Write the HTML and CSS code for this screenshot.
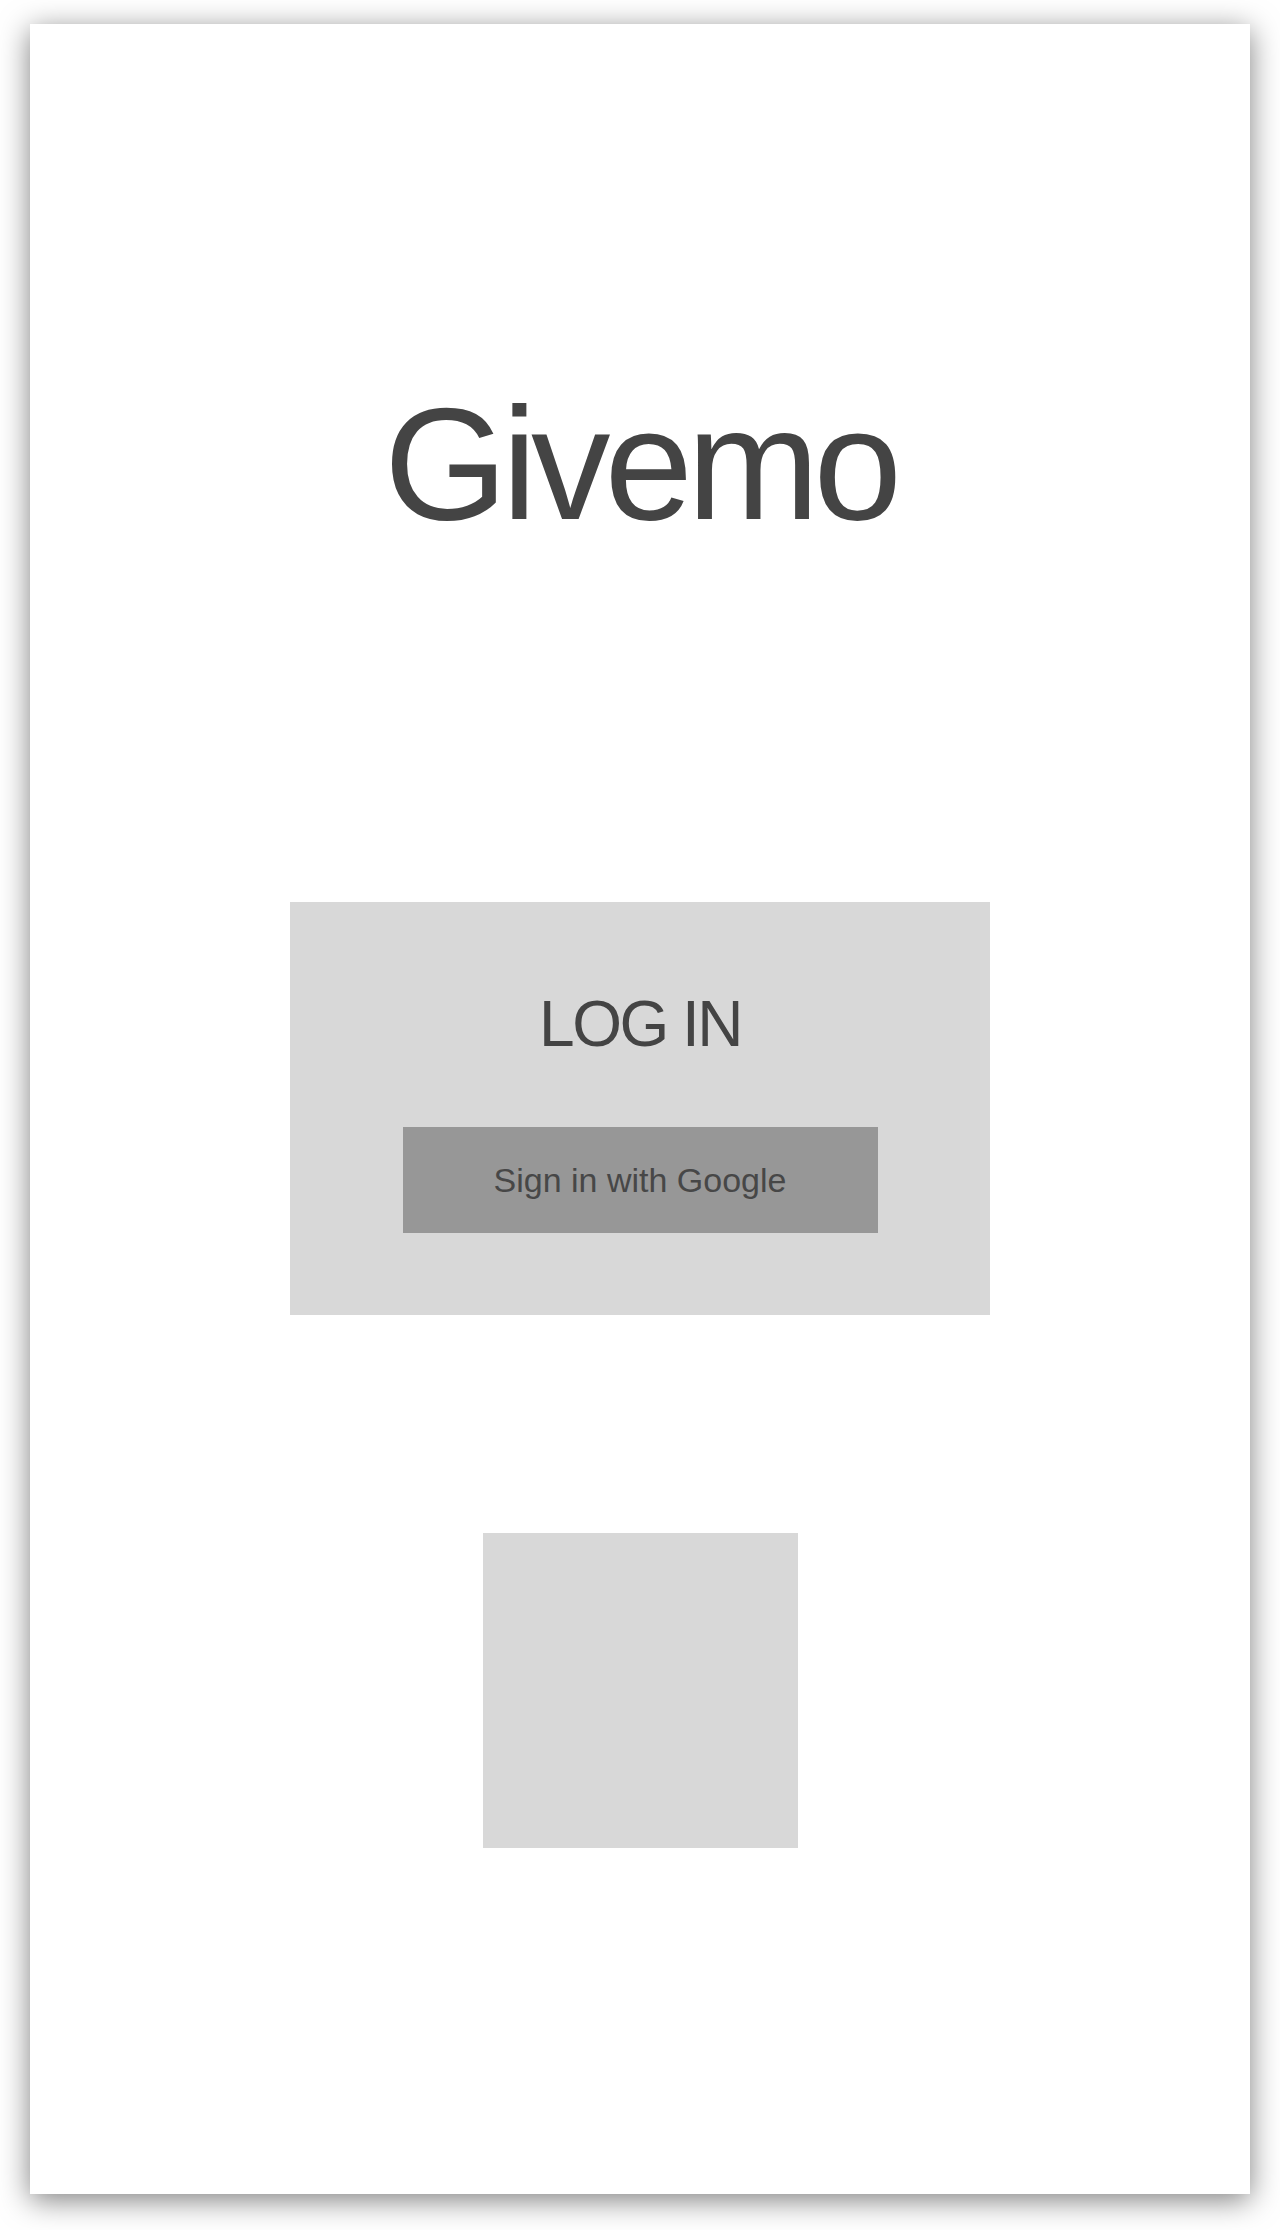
FILE: index.html
```html
<!DOCTYPE html>
<html lang="en">
<head>
<meta charset="utf-8">
<title>Givemo</title>
<link rel="stylesheet" href="styles.css">
</head>
<body>
  <main class="screen">
    <h1 class="brand">Givemo</h1>
    <section class="login">
      <h2 class="login-title">LOG IN</h2>
      <button class="google-btn" type="button">Sign in with Google</button>
    </section>
    <div class="placeholder"></div>
  </main>
</body>
</html>
```

FILE: styles.css
```css
html, body {
  margin: 0;
  padding: 0;
  background: #ffffff;
}

body {
  padding: 24px 30px 36px;
  font-family: "Liberation Sans", Arial, sans-serif;
}

.screen {
  width: 1220px;
  height: 2170px;
  box-sizing: border-box;
  background: #ffffff;
  box-shadow: 0 6px 28px rgba(0, 0, 0, 0.5);
  display: flex;
  flex-direction: column;
  align-items: center;
  padding-top: 361px;
}

.brand {
  margin: 0;
  font-size: 159px;
  line-height: 1;
  font-weight: 400;
  color: #444444;
  letter-spacing: -6px;
}

.login {
  margin-top: 358px;
  width: 700px;
  height: 413px;
  box-sizing: border-box;
  background: #d8d8d8;
  display: flex;
  flex-direction: column;
  align-items: center;
  padding-top: 90px;
}

.login-title {
  margin: 0;
  font-size: 64px;
  line-height: 1;
  font-weight: 400;
  color: #444444;
  letter-spacing: -2.5px;
}

.google-btn {
  margin-top: 71px;
  width: 475px;
  height: 106px;
  border: 0;
  padding: 0;
  background: #979797;
  color: #474747;
  font-family: "Liberation Sans", Arial, sans-serif;
  font-size: 34px;
  line-height: 1;
  letter-spacing: 0;
  display: flex;
  align-items: center;
  justify-content: center;
}

.placeholder {
  margin-top: 218px;
  width: 315px;
  height: 315px;
  background: #d8d8d8;
}
```
